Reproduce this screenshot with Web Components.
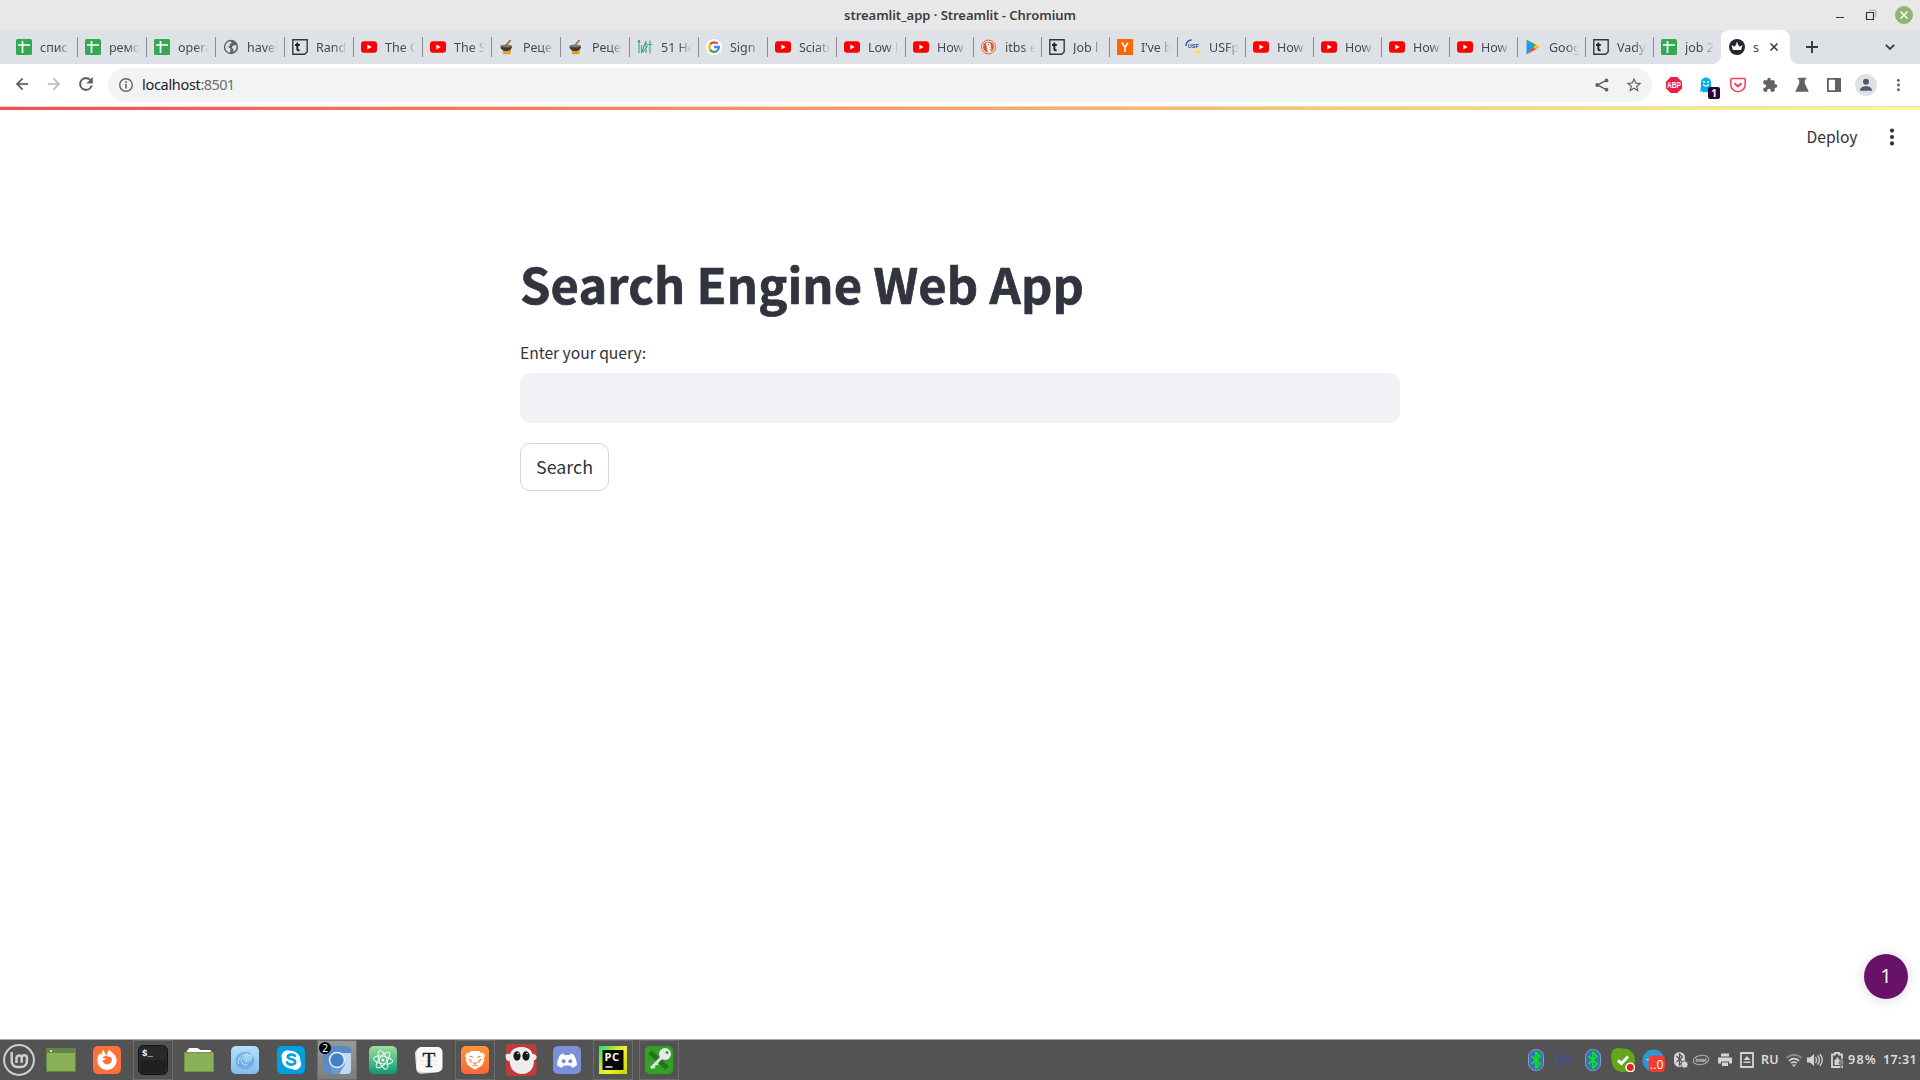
<!DOCTYPE html>
<html lang="en">
<head>
<meta charset="utf-8">
<title>streamlit_app · Streamlit - Chromium</title>
<style>
html,body{margin:0;height:100%;overflow:hidden;background:#fff}
body{font-family:"Noto Sans","Open Sans",sans-serif}
</style>
</head>
<body>
<desktop-screen></desktop-screen>
<script>
const ICONS = {
sheet:['0 0 16 16','<rect width="16" height="16" rx="1.5" fill="#34a853"/><path d="M2 6h12M6.500 2v12" stroke="#fff" stroke-width="1.700"/>'],
globe:['0 0 16 16','<circle cx="8" cy="8" r="7.200" fill="#5f6368"/><path d="M2.300 7.500C2.500 5 4.500 2.500 7.500 2.200L8.800 3.800 6.500 5.500 7 7 4.500 7.500 7.500 9.500 7.200 13.600C4.500 13.400 2.300 11 2.300 7.500zM10 6.500L13.300 6.200C14.200 9 12.500 12 10.200 13L10.500 10.200 8.800 8.800z" fill="#dee1e6"/>'],
tbox:['0 0 16 16','<path d="M.8.8h14.400v12L12.700 15.200H.8z" fill="none" stroke="#333840" stroke-width="1.400"/><path d="M5.300 3.500v6.500q0 1.600 2.300 1.200M3 6h4.800" fill="none" stroke="#222" stroke-width="1.900"/>'],
yt:['0 0 16 16','<rect y="2.300" width="16" height="11.400" rx="3" fill="#f00"/><path d="M6.300 5.500v5L10.700 8z" fill="#fff"/>'],
pot:['0 0 16 16','<path d="M6.500 7L11.500 1" stroke="#b5673a" stroke-width="1.800"/><path d="M3.500 11h8.500l-.8 4.300H4.200z" fill="#f39a1e"/><path d="M1.500 7h11.500c0 3.200-2.200 5-5.700 5S1.500 10.200 1.500 7z" fill="#373b3d"/><ellipse cx="7.300" cy="7" rx="5.800" ry="1.500" fill="#777b72"/>'],
lit:['0 0 16 16','<g fill="none" stroke="#45aa91" stroke-width="1.200"><path d="M2 3v11M4.500 6v8L9 2v12M6 13L10.500 7M13 1.500v13M10 5.500h5.500"/></g><circle cx="2" cy="2.200" r="1.200" fill="#3b9d83"/>'],
google:['0 0 16 16','<circle cx="8" cy="8" r="8" fill="#fff"/><g fill="none" stroke-width="2.300"><path d="M4.200 5.400A4.900 4.900 0 0 1 11.600 4.700" stroke="#ea4335"/><path d="M4.100 10.800a4.900 4.900 0 0 1 0-5.400" stroke="#fbbc05"/><path d="M11.500 11.500a4.900 4.900 0 0 1-7.500-.9" stroke="#34a853"/><path d="M8 8h4.900c0 1.500-.5 2.600-1.400 3.500" stroke="#4285f4"/></g>'],
duck:['0 0 16 16','<circle cx="7.500" cy="8" r="6.900" fill="#fff" stroke="#de5833" stroke-width="1"/><circle cx="7.500" cy="8" r="5.500" fill="#de5833"/><path d="M5 4c2-1.200 4.700-.3 4.700 2.500l.8 5.500-2 1.300-1.700-.2z" fill="#fff"/><path d="M7.500 8h3l-2 1.300z" fill="#fdd20a"/><path d="M8 10.500l3.500-.3-.5 2.500z" fill="#65bc46"/><circle cx="7.500" cy="5.800" r=".7" fill="#2d4f8e"/>'],
hn:['0 0 16 16','<path d="M0 0h16v16H0z" fill="#f60"/><path d="M5 3.500l3 5 3-5M8 8v5" stroke="#fff" stroke-width="1.500" fill="none"/>'],
usf:['0 0 16 16','<path d="M.8 7C1 3 4 .8 6.500 1" fill="none" stroke="#235592" stroke-width="1.300"/><text x="2.800" y="9" font-family="Liberation Sans" font-weight="bold" font-size="6" textLength="11" lengthAdjust="spacingAndGlyphs" fill="#204b8b">USF</text><path d="M8 12.500q3 .5 5-.8L14.500 9.500v2.500l1.500 3.500-3-2L9.500 14z" fill="#ffdf18"/>'],
play:['0 0 16 16','<path d="M1.500.5L9 8 1.500 15.500z" fill="#1f9bf0"/><path d="M1.500.5L11 5.700 8.700 8z" fill="#34a853"/><path d="M1.500 15.500L11 10.300 8.700 8z" fill="#f44336"/><path d="M10.800 5.600L15 8l-4.200 2.400L8.400 8z" fill="#fbbc04"/>'],
crown:['0 0 16 16','<circle cx="8" cy="8" r="8" fill="#25262f"/><path d="M2.500 6l3 1.700L8 4l2.500 3.700 3-1.700-1.400 5H3.900z" fill="#fff"/><circle cx="8" cy="4" r=".8" fill="#fff"/>'],
back:['0 0 24 24','<path d="M20 11H7.830l5.590-5.590L12 4l-8 8 8 8 1.410-1.410L7.830 13H20v-2z" fill="#5a5d61" stroke="#5a5d61" stroke-width=".5"/>'],
fwd:['0 0 24 24','<path d="M12 4l-1.410 1.410L16.170 11H4v2h12.170l-5.580 5.590L12 20l8-8z" fill="#bbbdbf" stroke="#bbbdbf" stroke-width=".5"/>'],
reload:['0 0 24 24','<path d="M17.650 6.350A7.960 7.960 0 0 0 12 4a8 8 0 1 0 7.730 10h-2.080A6 6 0 1 1 12 6c1.660 0 3.140.69 4.220 1.780L13 11h7V4z" fill="#5a5d61" stroke="#5a5d61" stroke-width=".5"/>'],
info:['0 0 16 16','<circle cx="8" cy="8" r="6.300" fill="none" stroke="#5f6368" stroke-width="1.400"/><path d="M8 7v4.500M8 4.300v1.700" stroke="#5f6368" stroke-width="1.600"/>'],
share:['0 0 16 16','<g fill="#5f6368"><circle cx="12.500" cy="3.400" r="1.900"/><circle cx="3.200" cy="8" r="1.900"/><circle cx="12.500" cy="12.600" r="1.900"/></g><path d="M12.500 3.400L3.200 8l9.300 4.600" fill="none" stroke="#5f6368" stroke-width="1.400"/>'],
star:['0 0 24 24','<path d="M22 9.240l-7.190-.62L12 2 9.190 8.630 2 9.240l5.460 4.730L5.820 21 12 17.270 18.180 21l-1.630-7.030L22 9.240zM12 15.400l-3.760 2.270 1-4.280-3.320-2.880 4.380-.38L12 6.100l1.710 4.040 4.380.38-3.320 2.880 1 4.280L12 15.400z" fill="#5f6368"/>'],
abp:['0 0 16 16','<path d="M4.700 0h6.600L16 4.700v6.600L11.300 16H4.700L0 11.300V4.700z" fill="#ed1e45"/><text x="1" y="11" font-family="Liberation Sans" font-weight="bold" font-size="8.400" textLength="14" lengthAdjust="spacingAndGlyphs" fill="#fff">ABP</text>'],
ghostery:['0 0 12 16','<path d="M0 14.300C1.400 12 .6 7 1 5 1.400 2 3.500.5 6 .5S10.600 2 11 5c.4 2-.4 7 1 9.300-.8 1-1.800.2-2.500-.3-.6 1.800-1.800 2-2.500.8-.7 1-1.400 1-2 0-.8 1.200-2 1-2.500-.8-.8.5-1.700 1.300-2.500.3z" fill="#00aef0"/><circle cx="4" cy="5" r="1" fill="#fff"/><circle cx="8" cy="5" r="1" fill="#fff"/><path d="M3 7.500q3 3.200 6 0" stroke="#fff" fill="none" stroke-width="1.200"/>'],
pocket:['0 0 16 16','<path d="M1.800 1.500h12.400q1 0 1 1V7.500a7.200 7.200 0 0 1-14.400 0V2.500q0-1 1-1z" fill="none" stroke="#ef4056" stroke-width="1.500"/><path d="M4.500 6.200L8 9.500l3.500-3.300" fill="none" stroke="#ef4056" stroke-width="2"/>'],
puzzle:['0 0 24 24','<path d="M20.500 11H19V7c0-1.100-.9-2-2-2h-4V3.500a2.500 2.500 0 0 0-5 0V5H4c-1.100 0-1.990.9-1.990 2v3.800H3.500c1.490 0 2.700 1.210 2.700 2.700s-1.210 2.700-2.700 2.700H2V20c0 1.100.9 2 2 2h3.800v-1.500c0-1.490 1.210-2.700 2.700-2.700s2.700 1.210 2.700 2.700V22H17c1.100 0 2-.9 2-2v-4h1.500a2.500 2.500 0 0 0 0-5z" fill="#5f6368"/>'],
flask:['0 0 16 16','<path d="M3.800.8h8.400V2.500h-1.400V6.500l4 8.200H1.200L5.200 6.500V2.500H3.800z" fill="#5f6368"/>'],
panel:['0 0 16 16','<path d="M1.900 1.900h12.200v12.200H1.900z" fill="none" stroke="#5f6368" stroke-width="1.800"/><path d="M9 2h5v12H9z" fill="#5f6368"/>'],
avatar:['0 0 22 22','<circle cx="11" cy="11" r="11" fill="#dee1e6"/><circle cx="11" cy="7.800" r="3" fill="#535a6c"/><path d="M5 16.700c0-3 3-4.400 6-4.400s6 1.400 6 4.400z" fill="#535a6c"/>'],
kebab:['0 0 16 16','<g fill="#5f6368"><circle cx="8.500" cy="2.700" r="1.700"/><circle cx="8.500" cy="8" r="1.700"/><circle cx="8.500" cy="13.300" r="1.700"/></g>'],
kebabDark:['0 0 20 20','<g fill="#31333f"><circle cx="10" cy="3.600" r="2.100"/><circle cx="10" cy="10" r="2.100"/><circle cx="10" cy="16.400" r="2.100"/></g>'],
x:['0 0 10 10','<path d="M1.500 1.500l7 7M8.500 1.500l-7 7" stroke="#333" stroke-width="1.500"/>'],
plus:['0 0 12 12','<path d="M6 0v12M0 6h12" stroke="#36393d" stroke-width="1.900"/>'],
chev:['0 0 12 12','<path d="M1.800 3.800L6 8l4.200-4.200" fill="none" stroke="#3c4043" stroke-width="1.900"/>'],
min:['0 0 10 18','<path d="M1 11.500h8" stroke="#333" stroke-width="1"/>'],
restore:['0 0 12 12','<path d="M1.500 3.500h7v7h-7z" fill="none" stroke="#333" stroke-width="1.200"/><path d="M4 1.300h6.800V8" fill="none" stroke="#a0a0a0" stroke-width="1"/>'],
close:['0 0 18 18','<circle cx="9" cy="9" r="9" fill="#92b372"/><path d="M5.500 5.500l7 7M12.500 5.500l-7 7" stroke="#fff" stroke-width="1.500"/>'],
mint:['0 0 32 32','<circle cx="16" cy="16" r="14.900" fill="none" stroke="#cfcfcf" stroke-width="2"/><path d="M8.700 8v9.500a5.600 5.600 0 0 0 5.600 5.600h4a5.600 5.600 0 0 0 5.600-5.600v-3.700a2.600 2.600 0 0 0-5.200 0v5M18.700 14a2.600 2.600 0 0 0-5.200 0v5" fill="none" stroke="#cfcfcf" stroke-width="2.500"/>'],
desk:['0 0 30 28','<path d="M0 2h30v24H0z" fill="#668544"/><path d="M1 7h28v18H1z" fill="#8bb158"/><circle cx="5" cy="5" r="1" fill="#fff"/>'],
folder:['0 0 30 28','<path d="M3 9V5q0-1.500 1.500-1.500V3q0-1 1-1h8l3 2h9q2 0 2 2v4z" fill="#fff"/><rect y="6" width="30" height="20" rx="1" fill="#729348"/><rect x="1" y="7" width="28" height="18" fill="#8bb158"/>'],
firefox:['0 0 28 28','<rect width="28" height="28" rx="5" fill="#ff7139"/><path d="M10 4c1.500 1 1.700 2.300 1.800 3.500 1 .1 1.700.6 2.200 1.500C14 6.500 15 4.800 17 3.700c.4 2.800 6.700 4.500 6.700 10.800A9.700 9.700 0 0 1 4.300 14.500c0-3.200 1.100-5.900 2.700-7.500l1.100 2z" fill="#fff"/><path d="M13 9c-1 1.700-3 1.500-3.800 2.600.8 1.100 2.600.8 3.600 1.300-1 1.700-2.200.8-3.200 1.200.4 3.500 3.200 4.900 5.600 4.100 3.600-1 4.500-4.700 2.700-7.200-2 .1-3.800-.8-4.900-2z" fill="#ff7139"/>'],
term:['0 0 30 30','<rect x=".5" y=".5" width="29" height="29" rx="5" fill="#292929" stroke="#131313"/><path d="M2 15h26v9q0 4-4 4H6q-4 0-4-4z" fill="#202020"/><text x="4" y="10.500" font-family="Liberation Mono" font-weight="bold" font-size="9" fill="#fff">$_</text>'],
wave:['0 0 28 28','<defs><linearGradient id="g" x2="0" y2="1"><stop stop-color="#b4e0fb"/><stop offset="1" stop-color="#85bdea"/></linearGradient></defs><rect width="28" height="28" rx="5" fill="url(#g)"/><path d="M22 9c3 6 .500 12.500-6 14-6 1.200-11-2-11.500-8C4.500 9 10 5 16.500 6c2.500.5 4 1.800 4.500 3.500-3-1.500-6.500-1.200-8 .8-1.800 2.700-.3 6 2.800 6.200C19.500 16.700 22 13.500 22 9z" fill="#70aee6"/><path d="M21 9.500c-4-2-9.500-.5-10.500 3.500-.9 4 2.500 6.500 6 5.800M7.500 18C6 12 11 7.500 17 7.800" fill="none" stroke="#c5e6fc" stroke-width="1"/>'],
skype:['0 0 28 28','<rect width="28" height="28" rx="5" fill="#009fe3"/><path d="M5 8a6 6 0 0 1 8-3.200A9.500 9.500 0 0 1 23.300 15a5.900 5.900 0 0 1-8.100 8A9.600 9.600 0 0 1 4.900 13 6 6 0 0 1 5 8z" fill="#fff"/><path d="M18 10c-1-2-7-2-7.200.8 0 3 7.400 1.600 7.400 5.200 0 3.300-6.900 3.600-8.200.3" fill="none" stroke="#08a1e0" stroke-width="2.600" stroke-linecap="round"/>'],
chromium:['0 0 28 28','<rect width="28" height="28" rx="5" fill="#5a8ac7"/><path d="M14 7h14V24q0 4-4 4H16l6-10z" fill="#c3d9f0"/><path d="M22 17L16 28H9l-2-9z" fill="#6c98d0"/><circle cx="14" cy="14" r="7.500" fill="#4580c6" stroke="#e7f2ff" stroke-width="1.500"/>'],
atom:['0 0 28 28','<defs><linearGradient id="g" x2="0" y2="1"><stop stop-color="#9ddf9c"/><stop offset="1" stop-color="#0b9a70"/></linearGradient></defs><rect width="28" height="28" rx="5" fill="url(#g)"/><g fill="none" stroke="#f0fff8" stroke-width="1"><ellipse cx="14" cy="14" rx="9.700" ry="3.800" transform="rotate(10 14 14)"/><ellipse cx="14" cy="14" rx="9.700" ry="3.800" transform="rotate(70 14 14)"/><ellipse cx="14" cy="14" rx="9.700" ry="3.800" transform="rotate(130 14 14)"/></g><circle cx="14" cy="14" r="1.500" fill="#fff"/>'],
typora:['0 0 28 28','<rect x=".5" y="2" width="25" height="25" rx="5" fill="#d8d8d8" transform="rotate(-5 14 14)"/><rect x="1.500" y="1" width="26" height="25" rx="5" fill="#fafafa"/><path d="M5 11h18M5 15h18M5 19h18" stroke="#e5e5e5"/><text x="14" y="20.500" text-anchor="middle" font-family="Liberation Serif" font-size="21" fill="#222" stroke="#222" stroke-width=".4">T</text>'],
brave:['0 0 28 28','<defs><linearGradient id="g" x2="0" y2="1"><stop stop-color="#ff9736"/><stop offset="1" stop-color="#ff6534"/></linearGradient></defs><rect width="28" height="28" rx="5" fill="url(#g)"/><path d="M10 5h8l2 2 2-.2 2 3-1 2.200.3 2-2 5L17 22l-3 1.500L11 22l-4.300-3-2-5 .3-2-1-2.200 2-3L8 7z" fill="#fff"/><path d="M8.500 10.300l3.500.9M19.500 10.300l-3.500.9M7.500 13l2.700 2-.4 2M20.500 13l-2.700 2 .4 2M11.800 16.500l2.200 1 2.200-1M11.500 20l2.500-1.200 2.500 1.200" fill="none" stroke="#ff7836" stroke-width="1.100"/>'],
ghost:['0 0 32 32','<rect x="1" y="0" width="30.500" height="32" rx="4" fill="#c23b3b"/><path d="M5 10C7 5 11 3 16.500 3S26 5 27.500 10c2 0 4 .8 4.200 3 0 2-1.500 3-2.800 3.300.3 9-5 13.700-12 13.700S5 25 4.600 17C1 17 .2 14 .8 10.500 2.500 9 4 10 5 10z" fill="#eee"/><ellipse cx="12" cy="12" rx="3.600" ry="4.700" fill="#171717"/><ellipse cx="21" cy="12" rx="3.600" ry="4.700" fill="#171717"/><circle cx="13" cy="9.500" r=".8" fill="#fff"/><circle cx="22" cy="9.500" r=".8" fill="#fff"/>'],
discord:['0 0 28 28','<rect width="28" height="28" rx="5" fill="#7b90da"/><path d="M10.500 7.500Q8 7.600 6.700 9.500 4 14 4 19c2 2 4 2.500 5.300 2.500l1.200-2h7l1.200 2c1.300 0 3.300-.5 5.300-2.500 0-5-2.700-9.500-2.700-9.500Q20 7.600 17.500 7.500l-.7 1.400h-5.600z" fill="#fff"/><circle cx="10.700" cy="15.300" r="2" fill="#768bd4"/><circle cx="17.300" cy="15.300" r="2" fill="#768bd4"/>'],
pycharm:['0 0 28 28','<defs><linearGradient id="g" x2="1" y2=".8"><stop stop-color="#16e477"/><stop offset=".35" stop-color="#a6e83b"/><stop offset=".6" stop-color="#f5ee32"/><stop offset="1" stop-color="#c7e000"/></linearGradient></defs><path d="M0 0h28v28H0z" fill="url(#g)"/><path d="M3.500 4h21v20h-21z" fill="#050805"/><text x="5.500" y="14.500" font-family="Open Sans" font-weight="bold" font-size="11" textLength="14.500" fill="#fff">PC</text><path d="M6.500 21h7" stroke="#fff" stroke-width="1.400"/>'],
key:['0 0 28 28','<rect width="28" height="28" rx="5" fill="#34a126"/><path d="M5 6l17 16" stroke="#27721e" stroke-width="5"/><path d="M16.500 11.500L6 22.300" stroke="#e2e2e2" stroke-width="3"/><path d="M8 20l2 2M11 17l2 2" stroke="#ddd" stroke-width="2"/><circle cx="20" cy="8" r="6" fill="#e8e8e8"/><circle cx="22" cy="6.500" r="1.500" fill="#34a126"/>'],
bt:['0 0 16 22','<rect x=".5" y=".5" width="15" height="21" rx="7" fill="#3e70b2" stroke="#79a2d5"/><path d="M3.500 7l8.500 8-4 4V3.500l4 3.800L3.500 15" fill="none" stroke="#00ed15" stroke-width="1.700"/>'],
skypeOn:['0 0 24 24','<path d="M2 2C5-.5 9 0 12 .5 19 .5 24 5 24 12s-5 12-12 12S.5 19 .5 12C-.2 8 0 5 2 2z" fill="#65a519"/><path d="M7 12.500l3.500 3 6.500-7" fill="none" stroke="#fff" stroke-width="3"/><circle cx="19.300" cy="19.500" r="4.200" fill="#e9201f" stroke="#fff" stroke-width="1.500"/>'],
telegram:['0 0 24 24','<circle cx="11.500" cy="12.500" r="11" fill="#289bd6"/><path d="M4 12l5-2.500v3z" fill="#fff"/><rect x="6.500" y="7.500" width="16.500" height="16.500" rx="4" fill="#f33b32"/><text x="8" y="20.500" font-family="Open Sans" font-size="12" textLength="13.500" lengthAdjust="spacingAndGlyphs" fill="#fff">..0</text>'],
btGrey:['0 0 16 18','<rect x="1" y="1" width="11" height="15" rx="5.500" fill="#d4d4d4"/><path d="M3.500 5l6 6-3 3V3l3 3-6 5" fill="none" stroke="#535353" stroke-width="1.200"/><circle cx="11.500" cy="13.500" r="3.500" fill="#d4d4d4" stroke="#535353" stroke-width=".7"/>'],
intel:['0 0 18 12','<ellipse cx="9" cy="6" rx="7.900" ry="4.600" fill="none" stroke="#b0b0b0" stroke-width="1" transform="rotate(-8 9 6)"/><text x="3.500" y="8" font-family="Liberation Sans" font-weight="bold" font-size="6" textLength="11" lengthAdjust="spacingAndGlyphs" fill="#d0d0d0">intel</text>'],
print:['0 0 16 16','<path d="M4 1.500h8v3H4zM1 5.500h14v6h-3v-2H4v2H1zM5 10.500h6v3.500H5z" fill="#d4d4d4"/>'],
eject:['0 0 16 18','<path d="M2 2h12v14H2z" fill="none" stroke="#d4d4d4" stroke-width="1.800"/><path d="M8 5l3.500 4h-7zM4.500 10.500h7V12h-7z" fill="#d4d4d4"/>'],
wifi:['0 0 18 16','<g fill="none" stroke="#d4d4d4" stroke-width="1.700"><path d="M1.500 6a10.500 10.500 0 0 1 15 0" stroke="#8e8e8e"/><path d="M4 8.800a7 7 0 0 1 10 0M6.200 11.200a4 4 0 0 1 5.600 0"/></g><path d="M9 15l-2.200-2.500h4.400z" fill="#d4d4d4"/>'],
sound:['0 0 16 16','<path d="M0 5.500h3L7 2v12l-4-3.500H0z" fill="#d4d4d4"/><path d="M8.500 5q2 3 0 6M10.600 3.300q3.500 4.700 0 9.400M12.800 1.800q5 6.200 0 12.400" fill="none" stroke="#d4d4d4" stroke-width="1.300"/>'],
battery:['0 0 15 18','<path d="M2 3.500h3V2h4v1.500h3V16H2z" fill="none" stroke="#d4d4d4" stroke-width="1.800"/><path d="M4.500 8.500h2v-2h2v2h2V14h-6z" fill="#d4d4d4"/><path d="M10.500 8l-2 5h3l-1 4 4-5.500h-3L13 8z" fill="#8d8d8d" stroke="#535353" stroke-width=".5"/>']
};

function define(name, html, init) {
  const t = document.createElement('template');
  t.innerHTML = html;
  customElements.define(name, class extends HTMLElement {
    connectedCallback() {
      if (this.shadowRoot) return;
      this.attachShadow({mode: 'open'}).append(t.content.cloneNode(true));
      if (init) init.call(this, this.shadowRoot);
    }
  });
}

// Inline glyph: name, w, h
define('ui-icon', '<style>:host{display:block;flex:none}svg{display:block;width:100%;height:100%}</style>', function (r) {
  const [vb, body] = ICONS[this.getAttribute('name')];
  const w = this.getAttribute('w') || 16, h = this.getAttribute('h') || w;
  this.style.width = w + 'px'; this.style.height = h + 'px';
  r.innerHTML += `<svg viewBox="${vb}">${body}</svg>`;
});

// Text tracked to a given advance width
define('fit-text', '<style>:host{display:block;white-space:pre;flex:none}span{display:inline-block}</style><span><slot></slot></span>', function (r) {
  const w = +this.getAttribute('w'), s = r.querySelector('span');
  const nat = s.getBoundingClientRect().width;
  s.style.letterSpacing = (w - nat) / this.textContent.length + 'px';
  this.style.width = w + 'px';
});

define('window-title', `<style>
:host{display:flex;height:30px;background:#e8e8e8;align-items:center;color:#3d3d3d}
.side{flex:1;display:flex;justify-content:flex-end;align-items:center;padding-right:7px}
.l{padding:0 0 0 7px}
fit-text{font:600 13px/20px "Noto Sans"}
.b{display:flex;align-items:center;width:78px;justify-content:space-between}
.b ui-icon:nth-child(2){margin-left:1px}
</style><div class="side l"></div><fit-text w="232">streamlit_app · Streamlit - Chromium</fit-text><div class="side"><div class="b"><ui-icon name="min" w="10" h="18"></ui-icon><ui-icon name="restore" w="12"></ui-icon><ui-icon name="close" w="18"></ui-icon></div></div>`);

define('browser-tab', `<style>
:host{display:flex;box-sizing:border-box;width:69px;height:34px;padding:0 7px 0 7px;align-items:center;flex:none;background:linear-gradient(#898c90,#898c90) right 0 top 7px/1px 20px no-repeat;color:#45484c}
:host([narrow]){width:68px}
:host([last]){background:none;width:67px}
.i{display:block;width:16px;height:16px;flex:none;margin-right:8px}
.t{font:12.500px/20px "Noto Sans";white-space:pre;overflow:hidden;flex:1;padding-top:2px;-webkit-mask-image:linear-gradient(90deg,#000 58%,transparent);mask-image:linear-gradient(90deg,#000 58%,transparent)}
</style><span class="i"></span><div class="t"><slot></slot></div>`, function (r) {
  r.querySelector('.i').innerHTML = `<ui-icon name="${this.getAttribute('icon')}" w="16"></ui-icon>`;
});

define('active-tab', `<style>
:host{display:flex;position:relative;box-sizing:border-box;width:69px;height:34px;background:#fff;border-radius:8px 8px 0 0;align-items:center;padding-left:8px;color:#45484c;flex:none}
.c{position:absolute;bottom:0;width:8px;height:8px}
.a{left:-8px;background:radial-gradient(circle at 0 0,transparent 7.500px,#fff 8px)}
.z{right:-8px;background:radial-gradient(circle at 100% 0,transparent 7.500px,#fff 8px)}
.t{font:12.500px/20px "Noto Sans";margin-left:8px;width:16px;padding-top:2px}
</style><i class="c a"></i><i class="c z"></i><ui-icon name="crown" w="16"></ui-icon><span class="t">s</span><ui-icon name="x" w="10"></ui-icon>`);

define('tab-strip', `<style>
:host{display:flex;height:34px;background:#dee1e6;padding:0 24px 0 9px;align-items:center}
.tabs{display:flex}.p{margin-left:16px}.sp{flex:1}
</style><div class="tabs"></div><ui-icon class="p" name="plus" w="12"></ui-icon><span class="sp"></span><ui-icon name="chev" w="12"></ui-icon>`, function (r) {
  const tabs = [['sheet','спис'],['sheet','ремо'],['sheet','opera'],['globe','havei'],['tbox','Rand'],['yt','The C'],['yt','The S'],['pot','Реце'],['pot','Реце'],['lit','51 He'],['google','Sign i'],['yt','Sciati'],['yt','Low l'],['yt','How'],['duck','itbs e'],['tbox','Job l'],['hn','I’ve b'],['usf','USFp'],['yt','How'],['yt','How'],['yt','How'],['yt','How'],['play','Goog'],['tbox','Vady'],['sheet','job 2']];
  r.querySelector('.tabs').innerHTML = tabs.map(([i, t], n) => `<browser-tab icon="${i}"${n > 12 ? ' narrow' : ''}${n == 24 ? ' last' : ''}>${t}</browser-tab>`).join('') + '<active-tab></active-tab>';
});

define('omni-box', `<style>
:host{display:flex;flex:1;height:34px;border-radius:17px;background:#f1f3f4;align-items:center;padding:0 9px 0 10px;box-sizing:border-box}
fit-text{font:14.500px/20px "Noto Sans";color:#1f2023;margin:0 0 2px 8px}
.p{color:#6b6e72;margin-left:0}
.sp{flex:1}.st{margin-left:15px}
</style><ui-icon name="info" w="16"></ui-icon><fit-text w="58.500">localhost</fit-text><fit-text class="p" w="34">:8501</fit-text><span class="sp"></span><ui-icon name="share" w="16"></ui-icon><ui-icon class="st" name="star" w="18"></ui-icon>`);

define('tool-bar', `<style>
:host{display:flex;box-sizing:border-box;height:43px;padding:4px 5px 4px 13px;border-bottom:1px solid #d9dbdd;background:#fff}
.n{display:flex;gap:14px;align-items:center;width:95px;height:32px;flex:none}
.n ui-icon:last-child{margin-left:-1px}
.x{display:flex;align-items:center;height:34px;width:263px;flex:none;padding-left:6px;box-sizing:border-box}
.x>div{width:32px;display:flex;justify-content:center;position:relative;flex:none}
.b{position:absolute;left:18px;top:10px;width:12px;height:12px;background:#2d0637;border-radius:2px;color:#fff;font:bold 10px/12px "Noto Sans";text-align:center}
</style><div class="n"><ui-icon name="back" w="18"></ui-icon><ui-icon name="fwd" w="18"></ui-icon><ui-icon name="reload" w="20"></ui-icon></div><omni-box></omni-box>
<div class="x"><div><ui-icon name="abp" w="16"></ui-icon></div><div><ui-icon name="ghostery" w="12" h="16"></ui-icon><span class="b">1</span></div><div><ui-icon name="pocket" w="16"></ui-icon></div><div><ui-icon name="puzzle" w="16"></ui-icon></div><div><ui-icon name="flask" w="16"></ui-icon></div><div><ui-icon name="panel" w="16"></ui-icon></div><div><ui-icon name="avatar" w="22"></ui-icon></div><div><ui-icon name="kebab" w="14"></ui-icon></div></div>`);

define('app-header', `<style>
:host{display:block;color:#31333f;font-family:"Noto Sans CJK SC",sans-serif}
.g{height:3px;background:linear-gradient(90deg,#ff4b4b,#fffd80)}
.r{display:flex;justify-content:flex-end;align-items:center;padding:15px 18px 0 0;height:24px}
fit-text{font-size:15.700px;line-height:24px;margin-right:24.500px}
</style><div class="g"></div><div class="r"><fit-text w="51">Deploy</fit-text><ui-icon name="kebabDark" w="20"></ui-icon></div>`);

define('search-form', `<style>
:host{display:flex;flex-direction:column;align-items:flex-start;width:880px;margin:101px auto 0;color:#31333f;font-family:"Noto Sans CJK SC",sans-serif}
h1{margin:0;font-size:48.800px;line-height:66px;font-weight:700;height:66px;-webkit-text-stroke:.7px #31333f}
.l{font-size:15.700px;line-height:24px;margin-top:25px}
.i{width:100%;height:50px;margin-top:8px;background:#f0f2f6;border-radius:10px}
button{all:unset;box-sizing:border-box;width:89px;height:48px;margin-top:20px;border:1px solid #d6d6d9;border-radius:10px;display:flex;align-items:center;justify-content:center;font-size:17.900px;line-height:30px;background:#fff;padding-bottom:3px}
</style><h1><fit-text w="564">Search Engine Web App</fit-text></h1><fit-text class="l" w="126">Enter your query:</fit-text><div class="i"></div><button><fit-text w="57">Search</fit-text></button>`);

define('page-badge', `<style>
:host{position:absolute;right:12px;bottom:40px;width:44px;height:45px;border-radius:50%;background:#671268;color:#fff;font:20px/44px "Open Sans";text-align:center;box-shadow:0 1px 12px rgba(0,0,0,.16)}
</style><slot></slot>`);

define('task-item', `<style>
:host{display:flex;position:relative;box-sizing:border-box;width:40px;height:40px;align-items:center;justify-content:center;flex:none}
:host([open]){box-shadow:inset 0 0 0 1px #6b6b6b}
:host([on]){background:linear-gradient(#999,#7c7c7c)}
.n{position:absolute;left:2px;top:2px;width:12px;height:12px;border-radius:50%;background:#000;color:#fff;font:10px/12px "Noto Sans";text-align:center}
</style><span class="i"></span>`, function (r) {
  const s = this.getAttribute('s') || 28, h = this.getAttribute('h') || s;
  r.querySelector('.i').innerHTML = `<ui-icon name="${this.getAttribute('icon')}" w="${s}" h="${h}"></ui-icon>` + (this.hasAttribute('on') ? '<span class="n">2</span>' : '');
});

define('sys-tray', `<style>
:host{display:flex;align-items:center;height:40px;width:392px;color:#dedede;font-family:"Noto Sans"}
fit-text{font:600 12.500px/20px "Noto Sans"}
.en{font:bold 13px/20px "DejaVu Sans Mono";color:#454f95}
</style>
<ui-icon name="bt" w="16" h="22"></ui-icon>
<fit-text class="en" w="18" style="margin-left:11px">EN</fit-text>
<ui-icon name="bt" w="16" h="22" style="margin-left:12px"></ui-icon>
<ui-icon name="skypeOn" w="24" style="margin-left:10px"></ui-icon>
<ui-icon name="telegram" w="24" style="margin-left:7px"></ui-icon>
<ui-icon name="btGrey" w="16" h="18" style="margin-left:7px"></ui-icon>
<ui-icon name="intel" w="18" h="12" style="margin-left:3px"></ui-icon>
<ui-icon name="print" w="16" style="margin-left:7px"></ui-icon>
<ui-icon name="eject" w="16" h="18" style="margin-left:6px"></ui-icon>
<fit-text w="18" style="margin-left:6px">RU</fit-text>
<ui-icon name="wifi" w="18" h="16" style="margin-left:6px"></ui-icon>
<ui-icon name="sound" w="16" style="margin-left:4px"></ui-icon>
<ui-icon name="battery" w="15" h="18" style="margin-left:7px"></ui-icon>
<fit-text w="29" style="margin-left:3px">98%</fit-text>
<fit-text w="34" style="margin-left:6px">17:31</fit-text>`);

define('task-bar', `<style>
:host{display:flex;box-sizing:border-box;height:41px;background:#535353;border-top:1px solid #a6a8a6}
.m{width:37px;height:40px;display:flex;align-items:center;justify-content:center;margin-right:4px}
.a{display:flex;gap:6px;flex:1}
</style><div class="m"><ui-icon name="mint" w="32"></ui-icon></div><div class="a">
<task-item icon="desk" s="30" h="28"></task-item><task-item icon="firefox"></task-item><task-item icon="term" s="30" open></task-item><task-item icon="folder" s="30" h="28"></task-item><task-item icon="wave"></task-item><task-item icon="skype"></task-item><task-item icon="chromium" open on></task-item><task-item icon="atom"></task-item><task-item icon="typora"></task-item><task-item icon="brave" open></task-item><task-item icon="ghost" s="32"></task-item><task-item icon="discord"></task-item><task-item icon="pycharm" open></task-item><task-item icon="key" open></task-item></div><sys-tray></sys-tray>`);

define('desktop-screen', `<style>
:host{display:flex;flex-direction:column;width:1920px;height:1080px;overflow:hidden}
main{flex:1;position:relative;background:#fff;min-height:0}
</style><window-title></window-title><tab-strip></tab-strip><tool-bar></tool-bar><main><app-header></app-header><search-form></search-form><page-badge>1</page-badge></main><task-bar></task-bar>`);
</script>
</body>
</html>
